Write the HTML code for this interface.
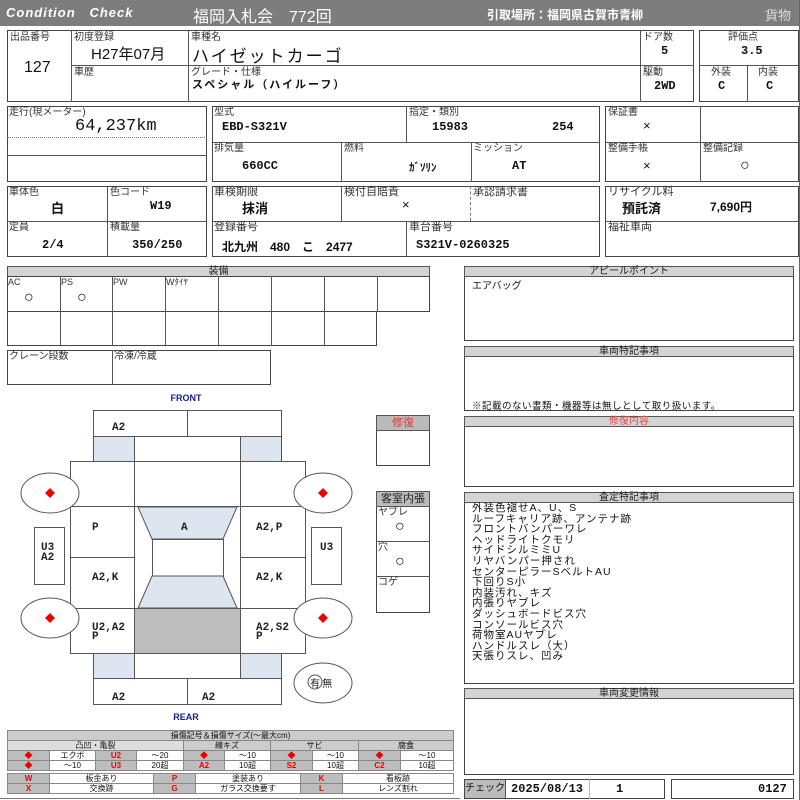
<!DOCTYPE html>
<html><head><meta charset="utf-8"><style>
*{margin:0;padding:0;box-sizing:border-box}
body{width:800px;height:800px;background:#fff;position:relative;overflow:hidden;font-family:"Liberation Sans","Noto Sans CJK JP",sans-serif;color:#111}
.a{position:absolute}
.b{position:absolute;border:1px solid #444}
.l{position:absolute;font-size:10px;line-height:11px;color:#333}
.v{position:absolute;font-size:12px;font-weight:bold;line-height:14px;font-family:"Liberation Mono","Noto Sans CJK JP",monospace}
.hl{position:absolute;height:1px;background:#555}
.vl{position:absolute;width:1px;background:#555}
.hd{position:absolute;background:#d4d4d4;border:1px solid #555;font-size:10px;line-height:9px;text-align:center;color:#222}
.t{position:absolute;font-size:11px;font-weight:bold;font-family:"Liberation Mono",monospace}
.o{position:absolute;font-size:16px;line-height:16px}
table{border-collapse:collapse}
td{border:1px solid #888;font-size:8px;text-align:center;height:10px;padding:0;line-height:9px}
.g{background:#bdbdbd}.r{color:#e00;font-weight:bold}
</style></head><body>
<div class="a" style="left:0;top:0;width:800px;height:26px;background:#7d7d7d"></div>
<div class="a" style="left:6px;top:5px;color:#fff;font-style:italic;font-weight:bold;font-size:13px;letter-spacing:1px">Condition&nbsp;&nbsp; Check</div>
<div class="a" style="left:193px;top:3px;color:#fff;font-size:16px">福岡入札会　772回</div>
<div class="a" style="left:487px;top:6px;color:#fff;font-size:12px;font-weight:bold">引取場所：福岡県古賀市青柳</div>
<div class="a" style="left:765px;top:5px;color:#ddd;font-size:13px">貨物</div>
<div class="vl" style="left:799px;top:0;height:800px;background:#666"></div>

<div class="b" style="left:7px;top:30px;width:687px;height:72px"></div>
<div class="vl" style="left:71px;top:30px;height:72px"></div>
<div class="vl" style="left:188px;top:30px;height:72px"></div>
<div class="vl" style="left:640px;top:30px;height:72px"></div>
<div class="hl" style="left:71px;top:65px;width:623px"></div>
<div class="l" style="left:10px;top:32px">出品番号</div>
<div class="a" style="left:24px;top:59px;font-size:16px">127</div>
<div class="l" style="left:74px;top:32px">初度登録</div>
<div class="a" style="left:91px;top:43px;font-size:15px">H27年07月</div>
<div class="l" style="left:74px;top:67px">車歴</div>
<div class="l" style="left:191px;top:32px">車種名</div>
<div class="a" style="left:192px;top:42px;font-size:17px;letter-spacing:2px">ハイゼットカーゴ</div>
<div class="l" style="left:191px;top:67px">グレード・仕様</div>
<div class="a" style="left:192px;top:76px;font-size:11px;font-weight:bold;letter-spacing:2px">スペシャル（ハイルーフ）</div>
<div class="l" style="left:643px;top:32px">ドア数</div>
<div class="v" style="left:661px;top:44px">5</div>
<div class="l" style="left:643px;top:67px">駆動</div>
<div class="v" style="left:654px;top:79px">2WD</div>
<div class="b" style="left:699px;top:30px;width:100px;height:72px"></div>
<div class="hl" style="left:699px;top:65px;width:100px"></div>
<div class="vl" style="left:747px;top:65px;height:37px"></div>
<div class="l" style="left:728px;top:32px">評価点</div>
<div class="v" style="left:741px;top:44px">3.5</div>
<div class="l" style="left:711px;top:67px">外装</div>
<div class="l" style="left:758px;top:67px">内装</div>
<div class="v" style="left:718px;top:79px">C</div>
<div class="v" style="left:766px;top:79px">C</div>

<div class="b" style="left:7px;top:106px;width:200px;height:76px"></div>
<div class="a" style="left:7px;top:137px;width:200px;border-top:1px dotted #777"></div>
<div class="hl" style="left:7px;top:155px;width:200px"></div>
<div class="l" style="left:9px;top:107px">走行(現メーター)</div>
<div class="a" style="left:75px;top:117px;font-size:17px;font-family:'Liberation Mono',monospace">64,237km</div>
<div class="b" style="left:212px;top:106px;width:388px;height:76px"></div>
<div class="vl" style="left:406px;top:106px;height:36px"></div>
<div class="hl" style="left:212px;top:142px;width:388px"></div>
<div class="vl" style="left:341px;top:142px;height:40px"></div>
<div class="vl" style="left:471px;top:142px;height:40px"></div>
<div class="l" style="left:214px;top:107px">型式</div>
<div class="v" style="left:222px;top:120px">EBD-S321V</div>
<div class="l" style="left:409px;top:107px">指定・類別</div>
<div class="v" style="left:432px;top:120px">15983</div>
<div class="v" style="left:552px;top:120px">254</div>
<div class="l" style="left:214px;top:143px">排気量</div>
<div class="v" style="left:242px;top:159px">660CC</div>
<div class="l" style="left:344px;top:143px">燃料</div>
<div class="a" style="left:409px;top:159px;font-size:11px;font-weight:bold">ｶﾞｿﾘﾝ</div>
<div class="l" style="left:473px;top:143px">ミッション</div>
<div class="v" style="left:512px;top:159px">AT</div>
<div class="b" style="left:605px;top:106px;width:194px;height:76px"></div>
<div class="vl" style="left:700px;top:106px;height:76px"></div>
<div class="hl" style="left:605px;top:142px;width:194px"></div>
<div class="l" style="left:608px;top:107px">保証書</div>
<div class="a" style="left:643px;top:118px;font-size:13px">×</div>
<div class="l" style="left:608px;top:143px">整備手帳</div>
<div class="a" style="left:643px;top:158px;font-size:13px">×</div>
<div class="l" style="left:703px;top:143px">整備記録</div>
<div class="o" style="left:740px;top:158px">○</div>

<div class="b" style="left:7px;top:186px;width:200px;height:71px"></div>
<div class="vl" style="left:107px;top:186px;height:71px"></div>
<div class="hl" style="left:7px;top:221px;width:200px"></div>
<div class="l" style="left:9px;top:187px">車体色</div>
<div class="a" style="left:51px;top:198px;font-size:13px;font-weight:bold">白</div>
<div class="l" style="left:110px;top:187px">色コード</div>
<div class="v" style="left:150px;top:199px">W19</div>
<div class="l" style="left:9px;top:222px">定員</div>
<div class="v" style="left:42px;top:238px">2/4</div>
<div class="l" style="left:110px;top:222px">積載量</div>
<div class="v" style="left:132px;top:238px">350/250</div>
<div class="b" style="left:212px;top:186px;width:388px;height:71px"></div>
<div class="vl" style="left:341px;top:186px;height:35px"></div>
<div class="a" style="left:470px;top:186px;height:35px;border-left:1px dashed #777"></div>
<div class="hl" style="left:212px;top:221px;width:388px"></div>
<div class="vl" style="left:406px;top:221px;height:36px"></div>
<div class="l" style="left:214px;top:187px;font-size:11px">車検期限</div>
<div class="a" style="left:242px;top:198px;font-size:13px;font-weight:bold">抹消</div>
<div class="l" style="left:344px;top:187px;font-size:11px">検付自賠責</div>
<div class="a" style="left:402px;top:197px;font-size:13px">×</div>
<div class="l" style="left:473px;top:187px;font-size:11px">承認請求書</div>
<div class="l" style="left:214px;top:222px;font-size:11px">登録番号</div>
<div class="a" style="left:222px;top:238px;font-size:12px;font-weight:bold">北九州　480　こ　2477</div>
<div class="l" style="left:409px;top:222px;font-size:11px">車台番号</div>
<div class="v" style="left:416px;top:238px">S321V-0260325</div>
<div class="b" style="left:605px;top:186px;width:194px;height:71px"></div>
<div class="hl" style="left:605px;top:221px;width:194px"></div>
<div class="l" style="left:608px;top:187px;font-size:11px">リサイクル料</div>
<div class="a" style="left:622px;top:198px;font-size:13px;font-weight:bold">預託済</div>
<div class="a" style="left:710px;top:198px;font-size:12px;font-weight:bold">7,690円</div>
<div class="l" style="left:608px;top:222px;font-size:11px">福祉車両</div>

<div class="hd" style="left:7px;top:266px;width:423px;height:11px">装備</div>
<div class="b" style="left:7px;top:276px;width:423px;height:36px"></div>
<div class="b" style="left:7px;top:311px;width:370px;height:35px"></div>
<div class="vl" style="left:60px;top:276px;height:70px"></div>
<div class="vl" style="left:112px;top:276px;height:70px"></div>
<div class="vl" style="left:165px;top:276px;height:70px"></div>
<div class="vl" style="left:218px;top:276px;height:70px"></div>
<div class="vl" style="left:271px;top:276px;height:70px"></div>
<div class="vl" style="left:324px;top:276px;height:70px"></div>
<div class="vl" style="left:377px;top:276px;height:36px"></div>
<div class="l" style="left:8px;top:277px;font-size:9px">AC</div>
<div class="l" style="left:61px;top:277px;font-size:9px">PS</div>
<div class="l" style="left:113px;top:277px;font-size:9px">PW</div>
<div class="l" style="left:166px;top:277px;font-size:9px">Wﾀｲﾔ</div>
<div class="o" style="left:24px;top:290px">○</div>
<div class="o" style="left:77px;top:290px">○</div>
<div class="b" style="left:7px;top:350px;width:264px;height:35px"></div>
<div class="vl" style="left:112px;top:350px;height:35px"></div>
<div class="l" style="left:9px;top:351px">クレーン段数</div>
<div class="l" style="left:114px;top:351px">冷凍/冷蔵</div>

<svg class="a" style="left:0;top:385px" width="460" height="345" viewBox="0 385 460 345">
<g stroke="#555" stroke-width="1" fill="#fff">
<rect x="93.5" y="410.5" width="188" height="26"/>
<line x1="187.5" y1="410" x2="187.5" y2="436"/>
<rect x="93.5" y="436.5" width="41" height="25" fill="#dce5f0"/>
<rect x="240.5" y="436.5" width="41" height="25" fill="#dce5f0"/>
<rect x="93.5" y="653.5" width="41" height="25" fill="#dce5f0"/>
<rect x="240.5" y="653.5" width="41" height="25" fill="#dce5f0"/>
<rect x="134.5" y="436.5" width="106" height="242"/>
<rect x="70.5" y="461.5" width="235" height="192"/>
<line x1="70" y1="506.5" x2="305" y2="506.5"/>
<line x1="70" y1="557.5" x2="134" y2="557.5"/><line x1="240" y1="557.5" x2="305" y2="557.5"/>
<line x1="70" y1="608.5" x2="305" y2="608.5"/>
<line x1="134.5" y1="436" x2="134.5" y2="678"/><line x1="240.5" y1="436" x2="240.5" y2="678"/>
<polygon points="138,507 237,507 223,539 152,539" fill="#dce5f0"/>
<rect x="152.5" y="539.5" width="71" height="37"/>
<polygon points="152,576 223,576 237,608 138,608" fill="#dce5f0"/>
<rect x="134.5" y="608.5" width="106" height="45" fill="#bdbdbd"/>
<rect x="93.5" y="678.5" width="188" height="26"/>
<line x1="187.5" y1="678" x2="187.5" y2="704"/>
<rect x="34.5" y="527.5" width="30" height="57"/>
<rect x="311.5" y="527.5" width="30" height="57"/>
<ellipse cx="50" cy="493" rx="29" ry="20"/>
<ellipse cx="50" cy="618" rx="29" ry="20"/>
<ellipse cx="323" cy="493" rx="29" ry="20"/>
<ellipse cx="323" cy="618" rx="29" ry="20"/>
<ellipse cx="323" cy="683" rx="29" ry="20"/>
<circle cx="315" cy="682" r="7"/>
</g>
<g fill="#e00">
<polygon points="50,488 55,493 50,498 45,493"/><polygon points="50,613 55,618 50,623 45,618"/>
<polygon points="323,488 328,493 323,498 318,493"/><polygon points="323,613 328,618 323,623 318,618"/>
</g>
<g font-family="Liberation Sans,sans-serif" font-weight="bold" fill="#1a1a8c" font-size="9" text-anchor="middle">
<text x="186" y="401">FRONT</text><text x="186" y="720">REAR</text></g>
<g font-family="Liberation Mono,monospace" font-weight="bold" font-size="11" fill="#222">
<text x="112" y="430">A2</text><text x="112" y="700">A2</text><text x="202" y="700">A2</text>
<text x="92" y="530">P</text><text x="181" y="530">A</text><text x="256" y="530">A2,P</text>
<text x="92" y="580">A2,K</text><text x="256" y="580">A2,K</text>
<text x="92" y="630">U2,A2</text><text x="92" y="639">P</text>
<text x="256" y="630">A2,S2</text><text x="256" y="639">P</text>
<text x="41" y="550">U3</text><text x="41" y="560">A2</text><text x="320" y="550">U3</text>
</g>
<text x="310" y="687" font-size="10" font-family="Noto Sans CJK JP,sans-serif" fill="#222">有 無</text>
</svg>
<div class="b" style="left:376px;top:415px;width:54px;height:51px"></div>
<div class="hd" style="left:376px;top:415px;width:54px;height:16px;line-height:14px;color:#e33;font-size:11px;background:#bbb">修復</div>
<div class="b" style="left:376px;top:491px;width:54px;height:122px"></div>
<div class="hd" style="left:376px;top:491px;width:54px;height:16px;line-height:14px;font-size:11px;background:#bbb">客室内張</div>
<div class="hl" style="left:376px;top:541px;width:54px"></div>
<div class="hl" style="left:376px;top:576px;width:54px"></div>
<div class="l" style="left:378px;top:507px">ヤブレ</div>
<div class="o" style="left:395px;top:519px">○</div>
<div class="l" style="left:378px;top:542px">穴</div>
<div class="o" style="left:395px;top:554px">○</div>
<div class="l" style="left:378px;top:577px">コゲ</div>

<table class="a" style="left:7px;top:730px;width:447px">
<tr><td colspan="12" class="g" style="background:#ccc">損傷記号＆損傷サイズ(～最大cm)</td></tr>
<tr><td colspan="4" style="background:#ddd">凸凹・亀裂</td><td colspan="2" class="g" style="background:#ccc">線キズ</td><td colspan="2" style="background:#ccc">サビ</td><td colspan="2" style="background:#ccc">腐食</td></tr>
<tr><td class="g r" style="width:42px">◆</td><td style="width:46px">エクボ</td><td class="g r" style="width:41px">U2</td><td style="width:47px">～20</td><td class="g r" style="width:41px">◆</td><td style="width:46px">～10</td><td class="g r" style="width:42px">◆</td><td style="width:46px">～10</td><td class="g r" style="width:42px">◆</td><td>～10</td></tr>
<tr><td class="g r">◆</td><td>～10</td><td class="g r">U3</td><td>20超</td><td class="g r">A2</td><td>10超</td><td class="g r">S2</td><td>10超</td><td class="g r">C2</td><td>10超</td></tr>
</table>
<table class="a" style="left:7px;top:773px;width:447px">
<tr><td class="g r" style="width:42px">W</td><td style="width:104px">板金あり</td><td class="g r" style="width:42px">P</td><td style="width:105px">塗装あり</td><td class="g r" style="width:42px">K</td><td>看板跡</td></tr>
<tr><td class="g r">X</td><td>交換跡</td><td class="g r">G</td><td>ガラス交換要す</td><td class="g r">L</td><td>レンズ割れ</td></tr>
</table>
<div class="hl" style="left:0;top:798px;width:460px;background:#777"></div>

<div class="b" style="left:464px;top:266px;width:330px;height:75px"></div>
<div class="hd" style="left:464px;top:266px;width:330px;height:11px">アピールポイント</div>
<div class="a" style="left:472px;top:277px;font-size:10px">エアバッグ</div>
<div class="b" style="left:464px;top:346px;width:330px;height:65px"></div>
<div class="hd" style="left:464px;top:346px;width:330px;height:11px">車両特記事項</div>
<div class="a" style="left:472px;top:398px;font-size:9.5px;letter-spacing:0.5px">※記載のない書類・機器等は無しとして取り扱います。</div>
<div class="b" style="left:464px;top:416px;width:330px;height:71px"></div>
<div class="hd" style="left:464px;top:416px;width:330px;height:11px;color:#e44">修復内容</div>
<div class="b" style="left:464px;top:492px;width:330px;height:192px"></div>
<div class="hd" style="left:464px;top:492px;width:330px;height:11px">査定特記事項</div>
<div class="a" style="left:472px;top:503px;font-size:10.5px;line-height:10.6px;letter-spacing:1px">外装色褪せA、U、S<br>ルーフキャリア跡、アンテナ跡<br>フロントバンパーワレ<br>ヘッドライトクモリ<br>サイドシルミミU<br>リヤバンパー押され<br>センターピラーSベルトAU<br>下回りS小<br>内装汚れ、キズ<br>内張りヤブレ<br>ダッシュボードビス穴<br>コンソールビス穴<br>荷物室AUヤブレ<br>ハンドルスレ（大）<br>天張りスレ、凹み</div>
<div class="b" style="left:464px;top:688px;width:330px;height:87px"></div>
<div class="hd" style="left:464px;top:688px;width:330px;height:11px">車両変更情報</div>
<div class="b" style="left:464px;top:779px;width:201px;height:20px"></div>
<div class="a" style="left:465px;top:780px;width:41px;height:18px;background:#bbb;border-right:1px solid #555;font-size:10px;line-height:18px;text-align:center">チェック</div>
<div class="vl" style="left:589px;top:779px;height:20px;background:#bbb"></div>
<div class="t" style="left:511px;top:782px;font-size:12px">2025/08/13</div>
<div class="t" style="left:616px;top:782px;font-size:12px">1</div>
<div class="b" style="left:671px;top:779px;width:123px;height:20px"></div>
<div class="t" style="left:758px;top:782px;font-size:12px">0127</div>
</body></html>
